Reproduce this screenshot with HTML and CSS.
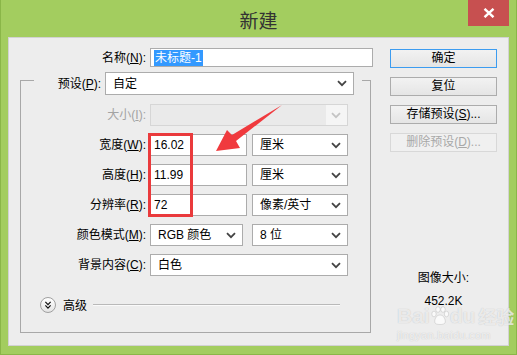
FILE: index.html
```html
<!DOCTYPE html>
<html lang="zh-CN">
<head>
    <meta charset="UTF-8">
    <meta name="viewport" content="width=device-width, initial-scale=1.0">
    <title>新建</title>
    <link rel="stylesheet" href="styles.css">
</head>
<body>
    <div class="window">
        <!-- 标题栏 -->
        <div class="titlebar">
            <div class="title">新建</div>
            <div class="close">
                <svg width="12" height="10" viewBox="0 0 12 10">
                    <path d="M1.5 0.8 L10.5 9.2 M10.5 0.8 L1.5 9.2" stroke="#fff" stroke-width="2.4" fill="none"/>
                </svg>
            </div>
        </div>

        <div class="client">
            <div class="main">
                <div class="name-row">
                    <span class="label">名称(<u>N</u>):</span>
                    <div class="field text name-input"><span class="selected">未标题-1</span></div>
                </div>

                <fieldset class="group">
                    <legend class="preset-row">
                        <span class="label">预设(<u>P</u>):</span>
                        <div class="field select preset">
                            <span>自定</span>
                            <svg class="chev" width="10" height="7" viewBox="0 0 10 7"><path d="M1 1.2 L5 5.2 L9 1.2" fill="none" stroke="#444" stroke-width="1.8"/></svg>
                        </div>
                    </legend>

                    <div class="row">
                        <span class="label disabled">大小(<u>I</u>):</span>
                        <div class="field select wide disabled-field">
                            <span></span>
                            <svg class="chev" width="10" height="7" viewBox="0 0 10 7"><path d="M1 1.2 L5 5.2 L9 1.2" fill="none" stroke="#c4c4c4" stroke-width="1.8"/></svg>
                        </div>
                    </div>
                    <div class="row">
                        <span class="label">宽度(<u>W</u>):</span>
                        <div class="field text num">16.02</div>
                        <div class="field select unit">
                            <span>厘米</span>
                            <svg class="chev" width="10" height="7" viewBox="0 0 10 7"><path d="M1 1.2 L5 5.2 L9 1.2" fill="none" stroke="#444" stroke-width="1.8"/></svg>
                        </div>
                    </div>
                    <div class="row">
                        <span class="label">高度(<u>H</u>):</span>
                        <div class="field text num">11.99</div>
                        <div class="field select unit">
                            <span>厘米</span>
                            <svg class="chev" width="10" height="7" viewBox="0 0 10 7"><path d="M1 1.2 L5 5.2 L9 1.2" fill="none" stroke="#444" stroke-width="1.8"/></svg>
                        </div>
                    </div>
                    <div class="row">
                        <span class="label">分辨率(<u>R</u>):</span>
                        <div class="field text num">72</div>
                        <div class="field select unit">
                            <span>像素/英寸</span>
                            <svg class="chev" width="10" height="7" viewBox="0 0 10 7"><path d="M1 1.2 L5 5.2 L9 1.2" fill="none" stroke="#444" stroke-width="1.8"/></svg>
                        </div>
                    </div>
                    <div class="row">
                        <span class="label">颜色模式(<u>M</u>):</span>
                        <div class="field select mode">
                            <span>RGB 颜色</span>
                            <svg class="chev" width="10" height="7" viewBox="0 0 10 7"><path d="M1 1.2 L5 5.2 L9 1.2" fill="none" stroke="#444" stroke-width="1.8"/></svg>
                        </div>
                        <div class="field select unit">
                            <span>8 位</span>
                            <svg class="chev" width="10" height="7" viewBox="0 0 10 7"><path d="M1 1.2 L5 5.2 L9 1.2" fill="none" stroke="#444" stroke-width="1.8"/></svg>
                        </div>
                    </div>
                    <div class="row">
                        <span class="label">背景内容(<u>C</u>):</span>
                        <div class="field select wide">
                            <span>白色</span>
                            <svg class="chev" width="10" height="7" viewBox="0 0 10 7"><path d="M1 1.2 L5 5.2 L9 1.2" fill="none" stroke="#444" stroke-width="1.8"/></svg>
                        </div>
                    </div>

                    <div class="advanced">
                        <div class="adv-icon">
                            <svg width="16" height="16" viewBox="0 0 16 16">
                                <path d="M5 4.5 L8 7.5 L11 4.5 M5 8.5 L8 11.5 L11 8.5" fill="none" stroke="#111" stroke-width="1.4"/>
                            </svg>
                        </div>
                        <span class="adv-text">高级</span>
                        <div class="adv-line"></div>
                    </div>
                </fieldset>
            </div>

            <div class="side">
                <div class="btn default">确定</div>
                <div class="btn">复位</div>
                <div class="btn">存储预设(<u>S</u>)...</div>
                <div class="btn disabled">删除预设(<u>D</u>)...</div>
                <div class="info">图像大小:</div>
                <div class="info-value">452.2K</div>
            </div>
        </div>

        <!-- 标注：红框与箭头 -->
        <svg class="markup" width="517" height="355" viewBox="0 0 517 355">
            <rect x="149.5" y="134.5" width="42" height="81" fill="none" stroke="#ea3a3c" stroke-width="3"/>
            <polygon points="216,151 227,130 232,135 282,105 236,141 240,148" fill="#f03a3e"/>
        </svg>

        <!-- 水印 -->
        <div class="watermark">
            <div class="wm-logo">
                <span>Bai</span>
                <svg width="20" height="20" viewBox="0 0 20 20">
                    <g fill="rgba(255,255,255,0.7)" stroke="rgba(150,150,150,0.35)" stroke-width="0.8">
                        <ellipse cx="4" cy="8" rx="2.2" ry="2.8"/>
                        <ellipse cx="8" cy="3.5" rx="2.2" ry="2.8"/>
                        <ellipse cx="13" cy="3.5" rx="2.2" ry="2.8"/>
                        <ellipse cx="16.5" cy="8" rx="2.2" ry="2.8"/>
                        <path d="M10 9 C6 9 4 14 5 17 C6 19 14 19 15 17 C16 14 14 9 10 9 Z"/>
                    </g>
                </svg>
                <span>du</span>
                <span class="wm-cn">经验</span>
            </div>
            <div class="wm-url">jingyan.baidu.com</div>
        </div>
    </div>
</body>
</html>
```

FILE: styles.css
```css
html, body {
    margin: 0;
    padding: 0;
}

body {
    width: 517px;
    height: 355px;
    overflow: hidden;
    font-family: "Liberation Sans", "Noto Sans CJK SC", sans-serif;
    font-size: 12px;
    line-height: 16px;
    color: #000;
}

u {
    text-decoration: underline;
    text-underline-offset: 1px;
}

/* 窗口外框 */
.window {
    position: relative;
    box-sizing: border-box;
    width: 517px;
    height: 355px;
    background: #a3cd5f;
    border: 1px solid #8ab648;
    border-top: none;
    display: flex;
    flex-direction: column;
}

.titlebar {
    height: 37px;
    display: flex;
    justify-content: center;
    align-items: center;
    position: relative;
}

.title {
    font-family: "Noto Sans CJK SC", sans-serif;
    font-size: 19px;
    line-height: 24px;
    color: #333;
    padding-top: 3px;
}

.close {
    position: absolute;
    top: 0;
    right: 7px;
    width: 41px;
    height: 26px;
    background: #c75050;
    display: flex;
    justify-content: center;
    align-items: center;
}

/* 客户区 */
.client {
    flex: 1;
    margin: 0 7px 8px;
    background: #ededed;
    border: 1px solid #d2d2d2;
    display: flex;
    padding-top: 10px;
}

.main {
    width: 364px;
}

.label {
    text-align: right;
    white-space: nowrap;
}

.label.disabled {
    color: #a3a3a3;
}

.name-row {
    display: flex;
    align-items: center;
    height: 19px;
}

.name-row .label {
    width: 137px;
    margin-right: 4px;
}

.field {
    box-sizing: border-box;
    height: 22px;
    border: 1px solid #acacac;
    background: #fff;
    display: flex;
    align-items: center;
    padding-left: 7px;
    white-space: nowrap;
}

.field.text {
    padding-left: 3px;
}

.name-input {
    width: 223px;
    height: 19px;
}

.selected {
    background: #3399ff;
    color: #fff;
    padding: 0 1px;
}

.chev {
    margin-left: auto;
    margin-right: 6px;
}

/* 分组框 */
.group {
    box-sizing: border-box;
    width: 351px;
    min-width: 0;
    margin: -2px 0 0 11px;
    padding: 9px 20px 19px 0;
    border: 1px solid #a8a8a8;
}

.preset-row {
    display: flex;
    align-items: center;
    margin-left: 13px;
    padding: 7px 8px 0 0;
}

.preset-row .label {
    width: 67px;
    margin-right: 4px;
}

.preset {
    width: 249px;
    height: 23px;
}

.row {
    display: flex;
    align-items: center;
    height: 22px;
    margin-bottom: 8px;
}

.row .label {
    width: 125px;
    margin-right: 4px;
}

.num {
    width: 97px;
    margin-right: 5px;
}

.unit {
    width: 96px;
}

.mode {
    width: 93px;
    margin-right: 9px;
}

.wide {
    width: 198px;
}

.disabled-field {
    background: linear-gradient(to right, #eaeaea 0, #eaeaea 175px, #f5f5f5 175px);
    border-color: #d6d6d6;
}

/* 高级 */
.advanced {
    display: flex;
    align-items: center;
    height: 16px;
    margin-top: 21px;
    padding-left: 19px;
}

.adv-icon {
    box-sizing: border-box;
    width: 16px;
    height: 16px;
    border-radius: 50%;
    border: 1px solid #a0a0a0;
    background: linear-gradient(#ffffff, #e4e4e4);
    display: flex;
    justify-content: center;
    align-items: center;
}

.adv-icon svg {
    width: 14px;
    height: 14px;
}

.adv-text {
    font-family: "Noto Sans CJK SC", sans-serif;
    margin-left: 7px;
}

.adv-line {
    flex: 1;
    height: 1px;
    background: #b9b9b9;
    border-bottom: 1px solid #fafafa;
    margin: 0 10px 0 6px;
}

/* 右侧按钮 */
.side {
    width: 107px;
    margin-left: 17px;
    padding-top: 1px;
    display: flex;
    flex-direction: column;
}

.btn {
    box-sizing: border-box;
    height: 19px;
    margin-bottom: 9px;
    border: 1px solid #acacac;
    background: linear-gradient(#f2f2f2, #e5e5e5);
    text-align: center;
    line-height: 17px;
    white-space: nowrap;
}

.btn.default {
    border-color: #3c9cf0;
}

.btn.disabled {
    color: #a8a8a8;
    border-color: #d8d8d8;
    background: #f0f0f0;
}

.info {
    margin-top: 109px;
    text-align: center;
}

.info-value {
    margin-top: 7px;
    text-align: center;
}

/* 标注层 */
.markup {
    position: absolute;
    left: -1px;
    top: 0;
    pointer-events: none;
}

.watermark {
    position: absolute;
    left: 396px;
    top: 303px;
    color: rgba(255, 255, 255, 0.7);
    text-shadow: 0 0 1px rgba(120, 120, 120, 0.45);
    pointer-events: none;
}

.wm-logo {
    display: flex;
    align-items: center;
    font-family: "Liberation Sans", sans-serif;
    font-weight: bold;
    font-size: 21px;
    line-height: 26px;
}

.wm-cn {
    font-family: "Noto Sans CJK SC", sans-serif;
    font-size: 18px;
    margin-left: 3px;
}

.wm-url {
    font-size: 11px;
    line-height: 12px;
    letter-spacing: 0.3px;
    color: rgba(255, 255, 255, 0.75);
}
```
